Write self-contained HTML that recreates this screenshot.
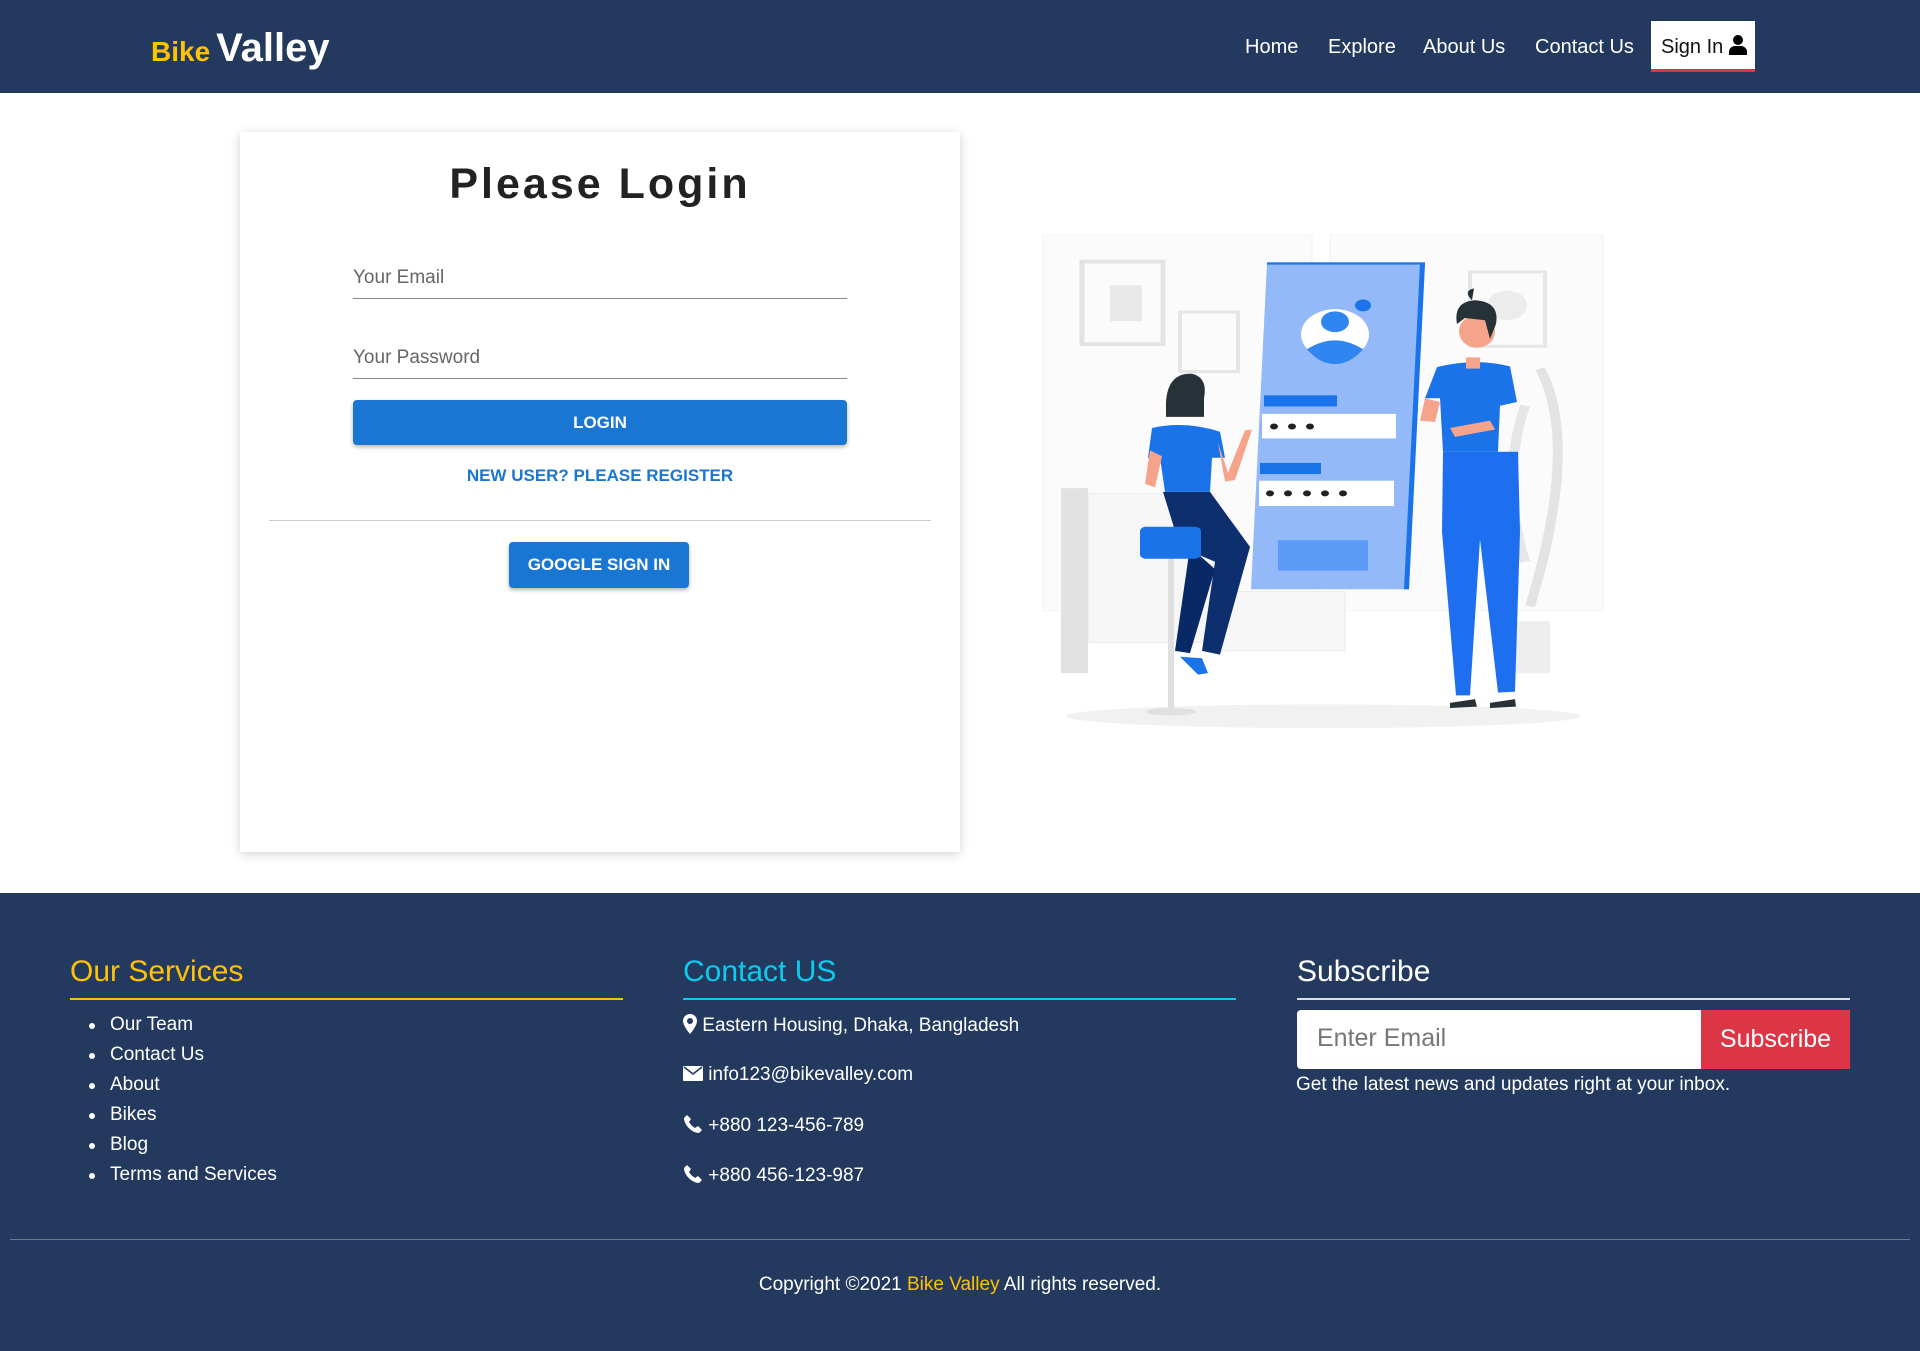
<!DOCTYPE html>
<html><head><meta charset="utf-8">
<style>
*{box-sizing:border-box;margin:0;padding:0}
body{width:1920px;height:1351px;overflow:hidden;font-family:"Liberation Sans",sans-serif;background:#fff;position:relative}
.nav{position:absolute;left:0;top:0;width:1920px;height:93px;background:#233a5e}
.logo{position:absolute;left:151px;top:26px;white-space:nowrap}
.logo .b{color:#ffc107;font-weight:bold;font-size:28px}
.logo .v{color:#fff;font-weight:bold;font-size:40px;margin-left:6px}
.nl{position:absolute;top:36px;color:#fff;font-size:20px}
.signin{position:absolute;left:1651px;top:21px;width:104px;height:51px;background:#fff;border-bottom:3px solid #dc3545;font-size:20px;color:#111;padding:14px 0 0 10px}
.card{position:absolute;left:240px;top:132px;width:720px;height:720px;background:#fff;box-shadow:0 2px 10px rgba(0,0,0,.18)}
.title{position:absolute;left:0;width:720px;top:160px;text-align:center;font-size:43px;font-weight:bold;letter-spacing:3px;color:#222}
.lbl{position:absolute;left:353px;font-size:19px;color:#666}
.line{position:absolute;left:353px;width:494px;height:1px;background:#888}
.btn{position:absolute;background:#1976d2;color:#fff;font-weight:bold;font-size:17px;text-align:center;border-radius:4px;box-shadow:0 2px 4px rgba(0,0,0,.3)}
.foot{position:absolute;left:0;top:893px;width:1920px;height:458px;background:#233a5e;color:#fff}
.h{position:absolute;top:62px;font-size:30px}
.ul{position:absolute;top:105px;width:553px;height:2px}
.li{position:absolute;font-size:19px}
</style></head><body>
<div class="nav">
<div class="logo"><span class="b">Bike</span><span class="v">Valley</span></div>
<div class="nl" style="left:1245px">Home</div>
<div class="nl" style="left:1328px">Explore</div>
<div class="nl" style="left:1423px">About Us</div>
<div class="nl" style="left:1535px">Contact Us</div>
<div class="signin">Sign In <svg width="18" height="20" viewBox="0 0 18 20" style="vertical-align:-2px"><circle cx="9" cy="5" r="5" fill="#000"/><path d="M0 20v-3a6 6 0 0 1 6-6h6a6 6 0 0 1 6 6v3z" fill="#000"/></svg></div>
</div>

<div class="card"></div>
<div class="title" style="left:240px">Please Login</div>
<div class="lbl" style="top:267px">Your Email</div>
<div class="line" style="top:298px"></div>
<div class="lbl" style="top:347px">Your Password</div>
<div class="line" style="top:378px"></div>
<div class="btn" style="left:353px;top:400px;width:494px;height:45px;line-height:45px">LOGIN</div>
<div style="position:absolute;left:353px;width:494px;top:466px;text-align:center;color:#1976d2;font-weight:bold;font-size:17px">NEW USER? PLEASE REGISTER</div>
<div style="position:absolute;left:269px;top:520px;width:662px;height:1px;background:#ccc"></div>
<div class="btn" style="left:509px;top:542px;width:180px;height:46px;line-height:46px">GOOGLE SIGN IN</div>

<svg style="position:absolute;left:980px;top:220px" width="700" height="520" viewBox="0 0 700 700" preserveAspectRatio="none">
<rect x="63" y="20" width="269" height="506" fill="#fbfbfb" stroke="#f2f2f2"/>
<rect x="350" y="20" width="273" height="506" fill="#fbfbfb" stroke="#f2f2f2"/>
<rect x="102" y="56" width="81" height="111" fill="none" stroke="#e3e3e3" stroke-width="5"/>
<rect x="130" y="88" width="32" height="48" fill="#e8e8e8"/>
<rect x="200" y="124" width="58" height="80" fill="none" stroke="#e6e6e6" stroke-width="4"/>
<rect x="490" y="70" width="75" height="100" fill="none" stroke="#e6e6e6" stroke-width="4"/>
<circle cx="527" cy="115" r="20" fill="#ececec"/>
<path d="M560 200 Q600 300 550 520" stroke="#e3e3e3" stroke-width="10" fill="none"/>
<path d="M545 250 Q520 350 545 460" stroke="#e6e6e6" stroke-width="10" fill="none"/>
<rect x="81" y="361" width="27" height="249" fill="#e2e2e2"/>
<rect x="108" y="368" width="127" height="201" fill="#f6f6f6" stroke="#e8e8e8"/>
<rect x="240" y="500" width="125" height="80" fill="#f6f6f6" stroke="#e8e8e8"/>
<ellipse cx="343" cy="668" rx="257" ry="16" fill="#f1f1f1"/>
<rect x="520" y="540" width="50" height="70" fill="#eee"/>
<polygon points="287,58 445,58 429,497 271,497" fill="#93b9f8"/>
<polygon points="440,58 445,58 429,497 424,497" fill="#1a73e8"/>
<rect x="287" y="57" width="158" height="3" fill="#1a73e8"/>
<circle cx="355" cy="154" r="34" fill="#fff"/>
<circle cx="355" cy="137" r="14" fill="#2f86f0"/>
<path d="M327 174 Q355 150 383 174 Q370 194 355 194 Q340 194 327 174z" fill="#2f86f0"/>
<circle cx="383" cy="115" r="8" fill="#1a73e8"/>
<rect x="284" y="236" width="73" height="15" fill="#1a73e8"/>
<rect x="282" y="261" width="134" height="33" fill="#fff"/>
<g fill="#222"><circle cx="294" cy="278" r="4"/><circle cx="312" cy="278" r="4"/><circle cx="330" cy="278" r="4"/></g>
<rect x="280" y="327" width="61" height="15" fill="#1a73e8"/>
<rect x="279" y="351" width="135" height="34" fill="#fff"/>
<g fill="#222"><circle cx="290" cy="368" r="4"/><circle cx="308" cy="368" r="4"/><circle cx="327" cy="368" r="4"/><circle cx="345" cy="368" r="4"/><circle cx="363" cy="368" r="4"/></g>
<rect x="298" y="431" width="90" height="41" fill="#5b9bf7"/>
<rect x="188" y="456" width="6" height="205" fill="#e0e0e0"/>
<ellipse cx="191" cy="662" rx="25" ry="5" fill="#e0e0e0"/>
<path d="M183 366 L230 366 L270 440 L240 585 L222 580 L235 460 L200 440 Z" fill="#0d2f6e"/>
<path d="M210 440 L235 470 L210 583 L195 580 Z" fill="#082866"/>
<rect x="160" y="413" width="61" height="43" rx="6" fill="#1a73e8"/>
<path d="M172 280 Q205 270 240 285 L245 320 L232 320 L230 366 L185 366 L180 320 L168 320 Z" fill="#1a73e8"/>
<path d="M170 310 L165 355 L175 360 L182 318Z" fill="#f5a48b"/>
<path d="M238 300 L248 340 L265 283 L272 282 L255 350 L245 352 Z" fill="#f5a48b"/>
<path d="M186 245 Q188 205 212 207 Q228 212 224 240 L224 265 L186 265 Z" fill="#263238"/>
<path d="M200 588 L222 590 L228 610 L218 612Z" fill="#1a73e8"/>
<path d="M463 312 L538 312 L540 420 L535 635 L518 636 L500 430 L490 640 L476 640 L462 420 Z" fill="#1e6ff0"/>
<path d="M457 198 Q495 185 530 197 L537 245 L520 250 L518 312 L463 312 L460 240 L445 240 Z" fill="#1a73e8"/>
<path d="M445 240 L440 270 L455 272 L460 245Z" fill="#f5a48b"/>
<path d="M470 280 L510 270 L515 282 L475 292Z" fill="#f5a48b"/>
<rect x="486" y="185" width="14" height="15" fill="#f5a48b"/>
<ellipse cx="497" cy="150" rx="18" ry="22" fill="#f5a48b"/>
<path d="M477 140 Q473 110 495 108 Q520 110 516 140 L510 160 L505 135 L485 132 Z" fill="#263238"/>
<path d="M490 105 Q484 95 494 92 L492 108Z" fill="#263238"/>
<path d="M470 650 L495 645 L497 655 L470 657Z" fill="#263238"/>
<path d="M510 650 L535 645 L536 655 L510 657Z" fill="#263238"/>
</svg>

<div class="foot">
<div class="h" style="left:70px;color:#ffc107">Our Services</div>
<div class="ul" style="left:70px;background:#ffc107"></div>
<div class="h" style="left:683px;color:#0dcaf0">Contact US</div>
<div class="ul" style="left:683px;background:#0dcaf0"></div>
<div class="h" style="left:1297px;color:#fff">Subscribe</div>
<div class="ul" style="left:1297px;background:#ddd"></div>

<div class="li" style="left:110px;top:121px">Our Team</div>
<div class="li" style="left:110px;top:151px">Contact Us</div>
<div class="li" style="left:110px;top:181px">About</div>
<div class="li" style="left:110px;top:211px">Bikes</div>
<div class="li" style="left:110px;top:241px">Blog</div>
<div class="li" style="left:110px;top:271px">Terms and Services</div>
<svg style="position:absolute;left:88px;top:129px" width="8" height="160"><g fill="#fff"><circle cx="4" cy="4" r="3"/><circle cx="4" cy="34" r="3"/><circle cx="4" cy="64" r="3"/><circle cx="4" cy="94" r="3"/><circle cx="4" cy="124" r="3"/><circle cx="4" cy="154" r="3"/></g></svg>

<div class="li" style="left:683px;top:121px"><svg width="14" height="20" viewBox="0 0 14 20" style="vertical-align:-3px"><path d="M7 0a7 7 0 0 1 7 7c0 5-7 13-7 13S0 12 0 7a7 7 0 0 1 7-7z" fill="#fff"/><circle cx="7" cy="7" r="3" fill="#233a5e"/></svg> Eastern Housing, Dhaka, Bangladesh</div>
<div class="li" style="left:683px;top:171px"><svg width="20" height="15" viewBox="0 0 20 15" style="vertical-align:-1px"><rect x="0" y="0" width="20" height="15" rx="1" fill="#fff"/><path d="M1 1l9 7 9-7" stroke="#233a5e" stroke-width="1.6" fill="none"/></svg> info123@bikevalley.com</div>
<div class="li" style="left:683px;top:221px"><svg width="20" height="20" viewBox="0 0 20 20" style="vertical-align:-3px"><path d="M4 1l4 4-2 3c1 2 3 4 6 6l3-2 4 4-3 3C9 19 1 11 1 4z" fill="#fff"/></svg> +880 123-456-789</div>
<div class="li" style="left:683px;top:271px"><svg width="20" height="20" viewBox="0 0 20 20" style="vertical-align:-3px"><path d="M4 1l4 4-2 3c1 2 3 4 6 6l3-2 4 4-3 3C9 19 1 11 1 4z" fill="#fff"/></svg> +880 456-123-987</div>

<div style="position:absolute;left:1297px;top:117px;width:404px;height:59px;background:#fff;border-radius:4px 0 0 4px;color:#777;font-size:25px;padding:14px 0 0 20px">Enter Email</div>
<div style="position:absolute;left:1701px;top:117px;width:149px;height:59px;background:#dc3545;color:#fff;font-size:25px;text-align:center;line-height:59px">Subscribe</div>
<div class="li" style="left:1296px;top:181px">Get the latest news and updates right at your inbox.</div>

<div style="position:absolute;left:10px;top:346px;width:1900px;height:1px;background:#6b7a90"></div>
<div class="li" style="left:0;width:1920px;text-align:center;top:381px">Copyright ©2021 <span style="color:#ffc107">Bike Valley</span> All rights reserved.</div>
</div>
</body></html>
